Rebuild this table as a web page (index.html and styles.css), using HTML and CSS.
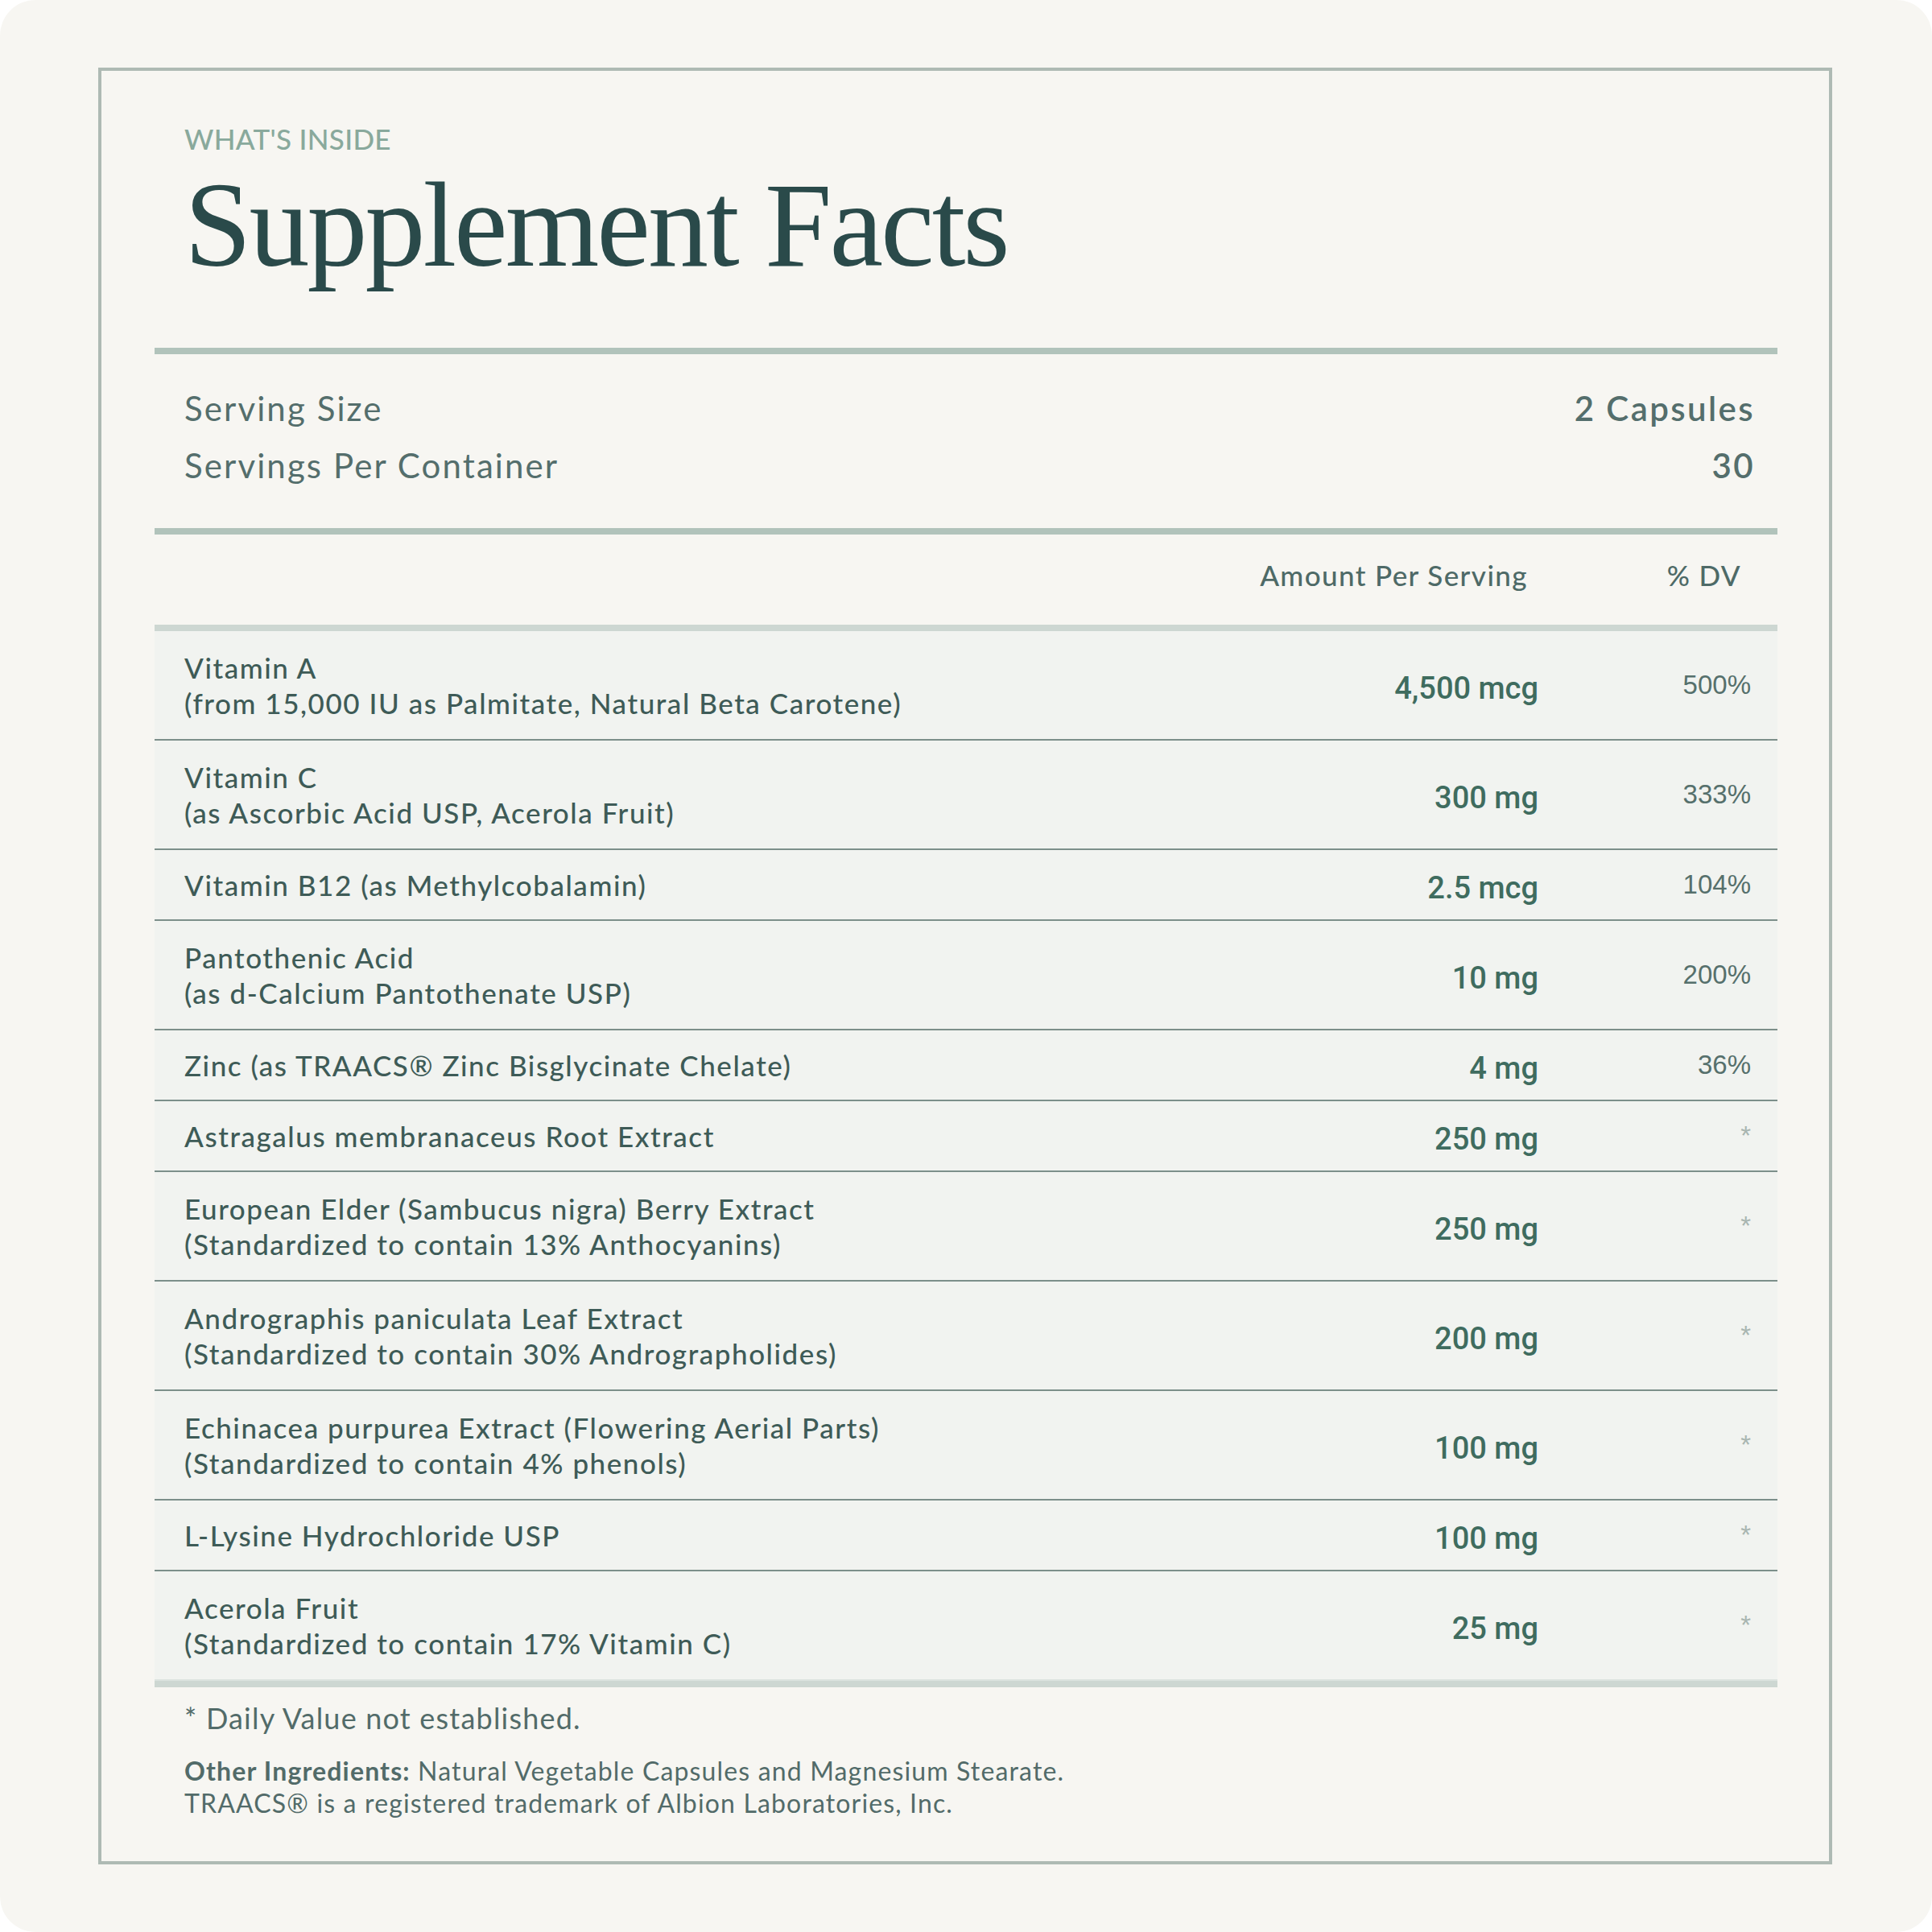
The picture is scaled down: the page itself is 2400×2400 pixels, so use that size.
FILE: index.html
```html
<!DOCTYPE html>
<html lang="en">
<head>
<meta charset="utf-8">
<title>Supplement Facts</title>
<link rel="stylesheet" href="styles.css">
</head>
<body>
<div class="card">
  <div class="frame">
    <header class="head">
      <p class="eyebrow">WHAT'S INSIDE</p>
      <h1 class="title">Supplement Facts</h1>
    </header>
    <div class="bar"></div>
    <section class="serving">
      <div class="srow"><span>Serving Size</span><span class="sval">2 Capsules</span></div>
      <div class="srow"><span>Servings Per Container</span><span class="sval">30</span></div>
    </section>
    <div class="bar"></div>
    <div class="thead">
      <span></span>
      <span class="th-amt">Amount Per Serving</span>
      <span class="th-dv">% DV</span>
    </div>
    <div class="tbody">
      <div class="row two">
        <div class="name">Vitamin A<br>(from 15,000 IU as Palmitate, Natural Beta Carotene)</div>
        <div class="amt">4,500 mcg</div>
        <div class="dv">500%</div>
      </div>
      <div class="row two">
        <div class="name">Vitamin C<br>(as Ascorbic Acid USP, Acerola Fruit)</div>
        <div class="amt">300 mg</div>
        <div class="dv">333%</div>
      </div>
      <div class="row">
        <div class="name">Vitamin B12 (as Methylcobalamin)</div>
        <div class="amt">2.5 mcg</div>
        <div class="dv">104%</div>
      </div>
      <div class="row two">
        <div class="name">Pantothenic Acid<br>(as d-Calcium Pantothenate USP)</div>
        <div class="amt">10 mg</div>
        <div class="dv">200%</div>
      </div>
      <div class="row">
        <div class="name">Zinc (as TRAACS® Zinc Bisglycinate Chelate)</div>
        <div class="amt">4 mg</div>
        <div class="dv">36%</div>
      </div>
      <div class="row">
        <div class="name">Astragalus membranaceus Root Extract</div>
        <div class="amt">250 mg</div>
        <div class="dv na">*</div>
      </div>
      <div class="row two">
        <div class="name">European Elder (Sambucus nigra) Berry Extract<br>(Standardized to contain 13% Anthocyanins)</div>
        <div class="amt">250 mg</div>
        <div class="dv na">*</div>
      </div>
      <div class="row two">
        <div class="name">Andrographis paniculata Leaf Extract<br>(Standardized to contain 30% Andrographolides)</div>
        <div class="amt">200 mg</div>
        <div class="dv na">*</div>
      </div>
      <div class="row two">
        <div class="name">Echinacea purpurea Extract (Flowering Aerial Parts)<br>(Standardized to contain 4% phenols)</div>
        <div class="amt">100 mg</div>
        <div class="dv na">*</div>
      </div>
      <div class="row">
        <div class="name">L-Lysine Hydrochloride USP</div>
        <div class="amt">100 mg</div>
        <div class="dv na">*</div>
      </div>
      <div class="row two last">
        <div class="name">Acerola Fruit<br>(Standardized to contain 17% Vitamin C)</div>
        <div class="amt">25 mg</div>
        <div class="dv na">*</div>
      </div>
    </div>
    <footer class="foot">
      <p class="note">* Daily Value not established.</p>
      <p class="other"><b>Other Ingredients:</b> Natural Vegetable Capsules and Magnesium Stearate.<br>TRAACS® is a registered trademark of Albion Laboratories, Inc.</p>
    </footer>
  </div>
</div>
</body>
</html>
```
FILE: styles.css
```css
html, body {
  margin: 0;
  padding: 0;
  background: #ffffff;
}

.card {
  width: 2400px;
  height: 2400px;
  box-sizing: border-box;
  background: #f7f6f2;
  border-radius: 44px;
  padding: 84px 124px 84px 122px;
  font-family: Lato, "Noto Sans", sans-serif;
}

.frame {
  height: 100%;
  box-sizing: border-box;
  border: 4px solid #aebab4;
  padding: 0 64px 0 66px;
}

.head {
  padding: 62px 37px 0;
}

.eyebrow {
  margin: 0;
  font-size: 35px;
  line-height: 44px;
  font-weight: 500;
  color: #89a99c;
  letter-spacing: 0.3px;
}

.title {
  margin: 10px 0 0;
  font-family: "Liberation Serif", "Times New Roman", serif;
  font-weight: 400;
  font-size: 150px;
  line-height: 150px;
  letter-spacing: -3px;
  color: #2a4a4a;
}

.bar {
  height: 8px;
  background: #b1c3bb;
}

.head + .bar {
  margin-top: 78px;
}

.serving {
  padding: 32px 28px 42px 37px;
  font-size: 42px;
  line-height: 71px;
  letter-spacing: 2.1px;
  color: #546e6c;
}

.srow {
  display: flex;
  justify-content: space-between;
}

.sval {
  font-weight: 600;
  letter-spacing: 2.4px;
}

.thead,
.row {
  display: grid;
  grid-template-columns: 1fr 360px 264px;
  align-items: center;
}

.thead {
  padding: 28px 33px 40px 37px;
  font-size: 35px;
  line-height: 44px;
  font-weight: 500;
  letter-spacing: 1.4px;
  color: #4e6a67;
}

.th-amt {
  text-align: right;
  padding-right: 13px;
}

.th-dv {
  text-align: right;
  padding-right: 12px;
}

.tbody {
  background: #f1f3f0;
  border-top: 8px solid #cdd7d2;
  border-bottom: 8px solid #cdd7d2;
}

.row {
  padding: 21px 33px 21px 37px;
  border-bottom: 2px solid #7c8f8a;
}

.row.two {
  padding-top: 23px;
  padding-bottom: 23px;
}

.row.last {
  border-bottom-color: #dce3df;
}

.name {
  font-size: 35px;
  line-height: 44px;
  font-weight: 500;
  letter-spacing: 1.55px;
  color: #3e5b57;
}

.amt {
  text-align: right;
  padding-top: 8px;
  font-family: Roboto, "Liberation Sans", Arial, sans-serif;
  font-weight: 500;
  font-size: 38px;
  line-height: 36px;
  color: #3f6c5f;
}

.dv {
  text-align: right;
  font-family: "Liberation Sans", Arial, sans-serif;
  font-size: 33px;
  line-height: 44px;
  color: #56706c;
}

.dv.na {
  color: #a9b6b1;
}

.foot {
  padding: 14px 37px 0;
  color: #526b69;
}

.note {
  margin: 0;
  font-size: 36px;
  line-height: 48px;
  letter-spacing: 1.2px;
}

.other {
  margin: 22px 0 0;
  font-size: 32px;
  line-height: 40px;
  letter-spacing: 1.15px;
}

.other b {
  font-weight: 700;
}
```
